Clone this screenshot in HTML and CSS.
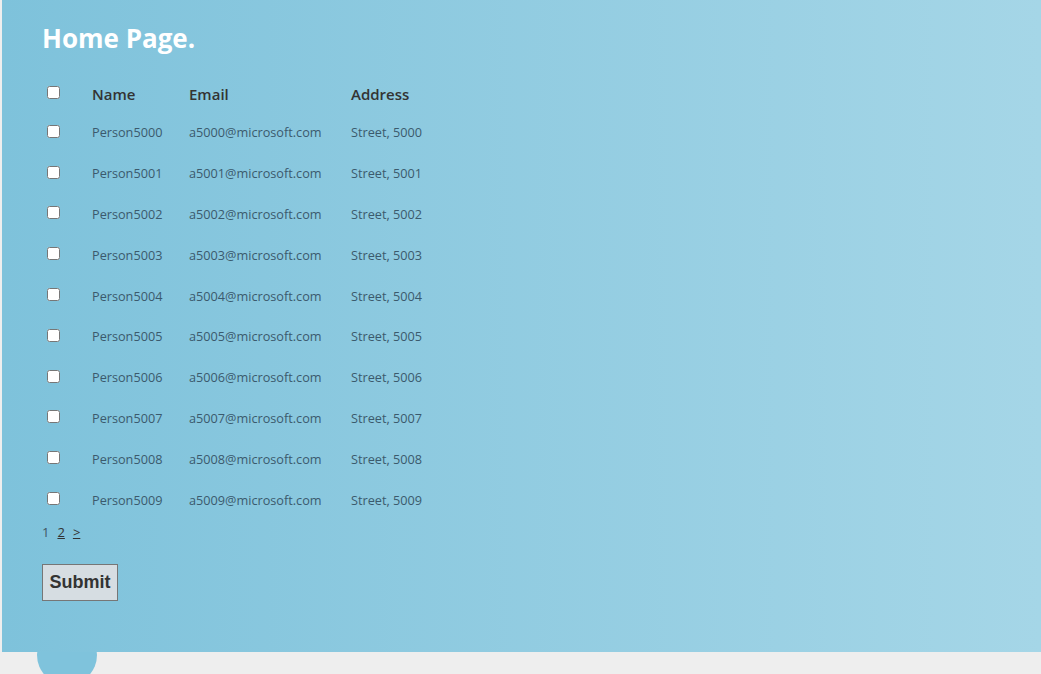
FILE: index.html
```html
<!DOCTYPE html>
<html>
<head>
<meta charset="utf-8">
<link rel="stylesheet" href="styles.css">
</head>
<body>
<div class="blob"></div>
<main class="panel">
  <h1 class="title">Home Page.</h1>
  <table class="grid">
    <thead>
      <tr class="head-row">
        <th class="c-check"><input type="checkbox"></th>
        <th class="c-name">Name</th>
        <th class="c-email">Email</th>
        <th class="c-addr">Address</th>
      </tr>
    </thead>
    <tbody>
      <tr><td class="c-check"><input type="checkbox"></td><td>Person5000</td><td>a5000@microsoft.com</td><td>Street, 5000</td></tr>
      <tr><td class="c-check"><input type="checkbox"></td><td>Person5001</td><td>a5001@microsoft.com</td><td>Street, 5001</td></tr>
      <tr><td class="c-check"><input type="checkbox"></td><td>Person5002</td><td>a5002@microsoft.com</td><td>Street, 5002</td></tr>
      <tr><td class="c-check"><input type="checkbox"></td><td>Person5003</td><td>a5003@microsoft.com</td><td>Street, 5003</td></tr>
      <tr><td class="c-check"><input type="checkbox"></td><td>Person5004</td><td>a5004@microsoft.com</td><td>Street, 5004</td></tr>
      <tr><td class="c-check"><input type="checkbox"></td><td>Person5005</td><td>a5005@microsoft.com</td><td>Street, 5005</td></tr>
      <tr><td class="c-check"><input type="checkbox"></td><td>Person5006</td><td>a5006@microsoft.com</td><td>Street, 5006</td></tr>
      <tr><td class="c-check"><input type="checkbox"></td><td>Person5007</td><td>a5007@microsoft.com</td><td>Street, 5007</td></tr>
      <tr><td class="c-check"><input type="checkbox"></td><td>Person5008</td><td>a5008@microsoft.com</td><td>Street, 5008</td></tr>
      <tr><td class="c-check"><input type="checkbox"></td><td>Person5009</td><td>a5009@microsoft.com</td><td>Street, 5009</td></tr>
    </tbody>
  </table>
  <div class="pager"><span class="current">1</span><a href="#" class="page">2</a><a href="#" class="page">&gt;</a></div>
  <button class="submit" type="button">Submit</button>
</main>
</body>
</html>
```

FILE: styles.css
```css
html, body {
  margin: 0;
  padding: 0;
}
body {
  background: #eeeeee;
  font-family: "Open Sans", "Noto Sans", sans-serif;
  height: 674px;
  overflow: hidden;
  position: relative;
}
.blob {
  position: absolute;
  left: 37px;
  top: 625px;
  width: 60px;
  height: 60px;
  border-radius: 50%;
  background: #7fc3dc;
}
.panel {
  position: relative;
  margin-left: 2px;
  height: 652px;
  box-sizing: border-box;
  padding: 20px 40px 0 40px;
  background: linear-gradient(to right, #7ec2db 0%, #a5d6e7 100%);
}
.title {
  margin: 0;
  height: 55px;
  line-height: 36px;
  font-size: 26px;
  font-weight: 700;
  color: #ffffff;
}
.grid {
  border-collapse: collapse;
  border-spacing: 0;
}
.grid th, .grid td {
  padding: 0;
  text-align: left;
  vertical-align: middle;
}
.head-row {
  height: 37px;
}
.grid th {
  font-size: 15px;
  font-weight: 600;
  color: #333333;
}
.grid tbody tr {
  height: 40.8px;
}
.grid td {
  font-size: 12.7px;
  color: #3b5a6d;
}
.c-check {
  width: 50px;
}
.c-check input {
  margin: 0 0 2px 5px;
  width: 13px;
  height: 13px;
  display: block;
}
.c-name {
  width: 97px;
}
.c-email {
  width: 162px;
}
.pager {
  margin-top: 2px;
  height: 20px;
  line-height: 20px;
  font-size: 13px;
  color: #3f5563;
  display: flex;
  gap: 6px;
}
.pager .page {
  color: #333333;
  text-decoration: underline;
  margin-left: 2px;
}
.submit {
  display: block;
  margin-top: 22px;
  width: 76px;
  height: 37px;
  padding: 0;
  font-family: "Liberation Sans", Arial, sans-serif;
  font-size: 18px;
  font-weight: 700;
  color: #333333;
  background: #d6dde2;
  border: 1px solid #767676;
  border-radius: 0;
}
```
